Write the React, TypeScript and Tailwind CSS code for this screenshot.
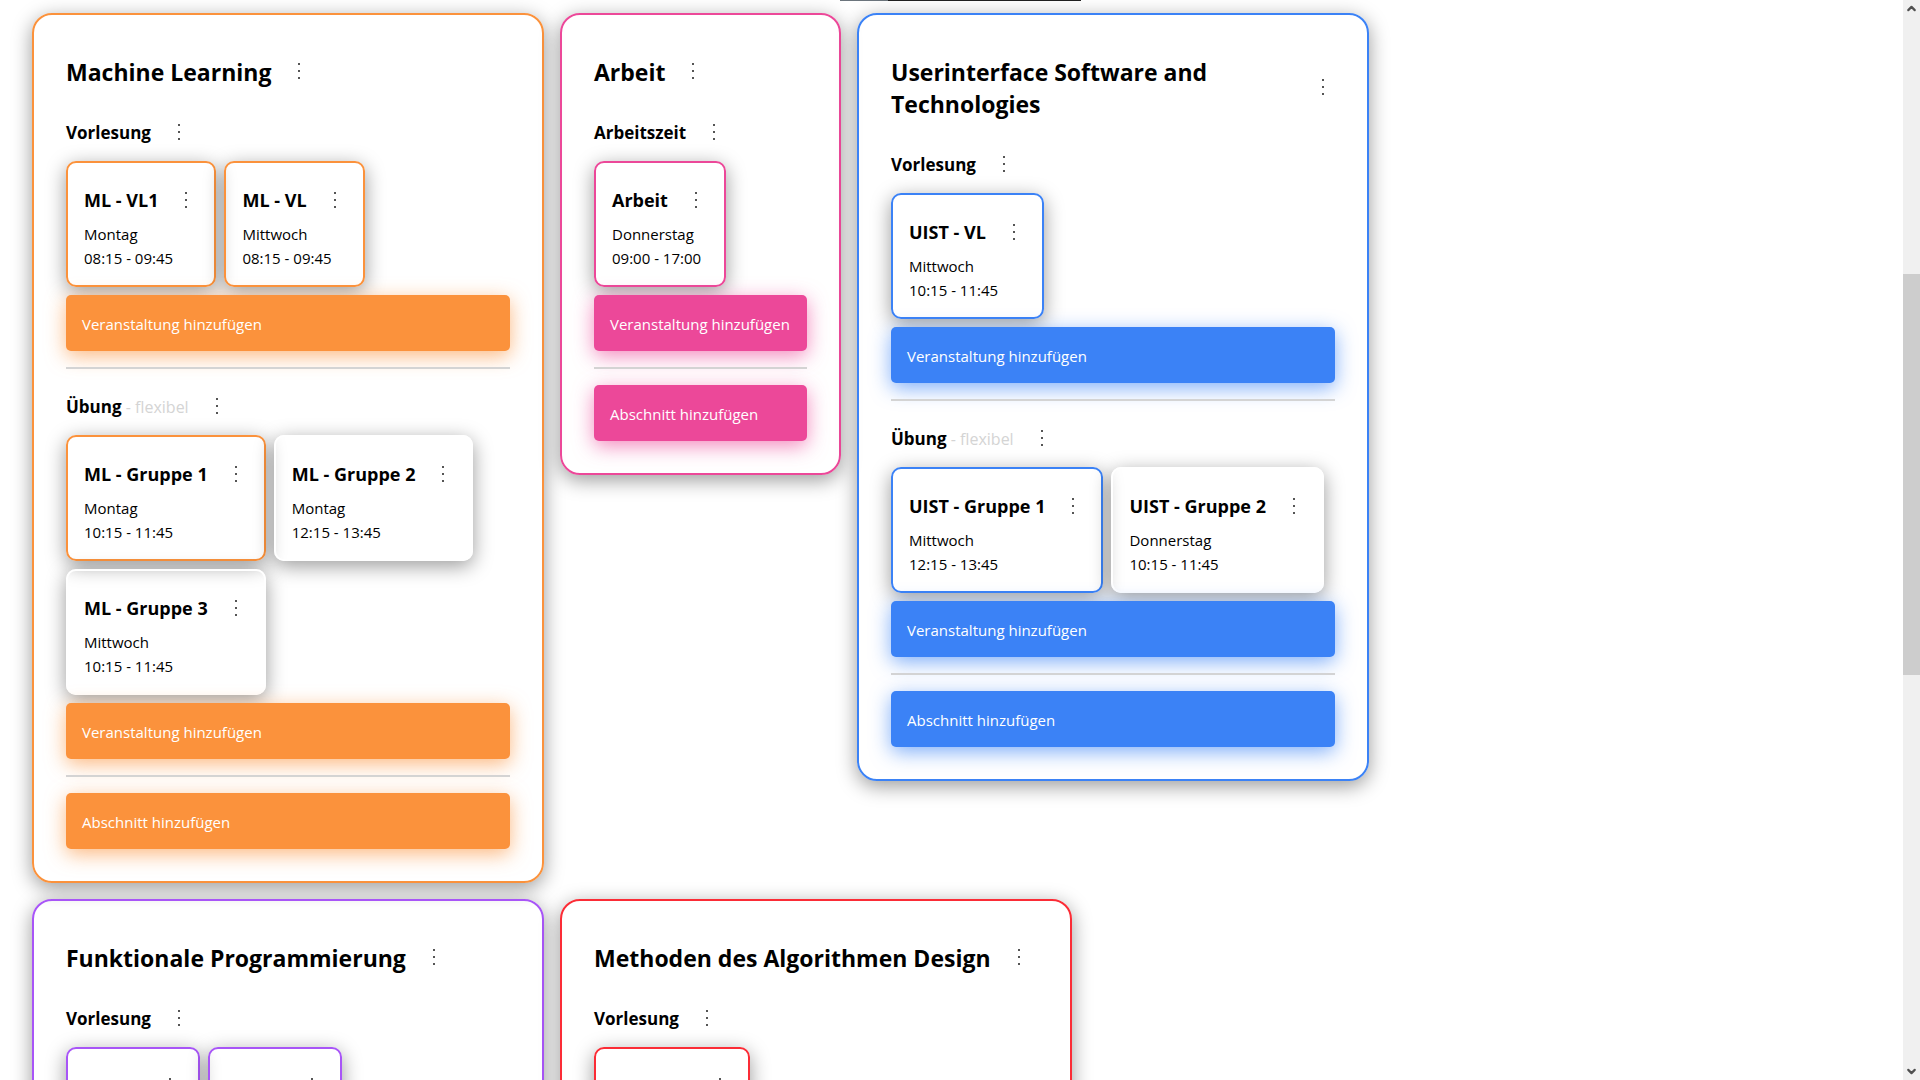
import { ChevronDown, ChevronUp } from "lucide-react";

type Tone = "orange" | "pink" | "blue" | "purple" | "red";
type Slot = { name: string; day: string; time: string; active: boolean };
type Section = { name: string; flexible?: boolean; slots: Slot[] };
type Course = { name: string; tone: Tone; width: string; sections: Section[] };

const borders: Record<Tone, string> = {
  orange: "border-[#fb923c]",
  pink: "border-[#ec4899]",
  blue: "border-[#3b82f6]",
  purple: "border-[#a855f7]",
  red: "border-[#fb2c36]",
};

const fills: Record<Tone, string> = {
  orange: "bg-[#fb923c] shadow-[0_5px_20px_rgba(251,146,60,0.65)]",
  pink: "bg-[#ec4899] shadow-[0_5px_20px_rgba(236,72,153,0.65)]",
  blue: "bg-[#3b82f6] shadow-[0_5px_20px_rgba(59,130,246,0.65)]",
  purple: "bg-[#a855f7] shadow-[0_5px_20px_rgba(168,85,247,0.65)]",
  red: "bg-[#fb2c36] shadow-[0_5px_20px_rgba(251,44,54,0.65)]",
};

const courses: Course[] = [
  {
    name: "Machine Learning",
    tone: "orange",
    width: "w-lg",
    sections: [
      {
        name: "Vorlesung",
        slots: [
          { name: "ML - VL1", day: "Montag", time: "08:15 - 09:45", active: true },
          { name: "ML - VL", day: "Mittwoch", time: "08:15 - 09:45", active: true },
        ],
      },
      {
        name: "Übung",
        flexible: true,
        slots: [
          { name: "ML - Gruppe 1", day: "Montag", time: "10:15 - 11:45", active: true },
          { name: "ML - Gruppe 2", day: "Montag", time: "12:15 - 13:45", active: false },
          { name: "ML - Gruppe 3", day: "Mittwoch", time: "10:15 - 11:45", active: false },
        ],
      },
    ],
  },
  {
    name: "Arbeit",
    tone: "pink",
    width: "w-[281px]",
    sections: [
      {
        name: "Arbeitszeit",
        slots: [{ name: "Arbeit", day: "Donnerstag", time: "09:00 - 17:00", active: true }],
      },
    ],
  },
  {
    name: "Userinterface Software and Technologies",
    tone: "blue",
    width: "w-lg",
    sections: [
      {
        name: "Vorlesung",
        slots: [{ name: "UIST - VL", day: "Mittwoch", time: "10:15 - 11:45", active: true }],
      },
      {
        name: "Übung",
        flexible: true,
        slots: [
          { name: "UIST - Gruppe 1", day: "Mittwoch", time: "12:15 - 13:45", active: true },
          { name: "UIST - Gruppe 2", day: "Donnerstag", time: "10:15 - 11:45", active: false },
        ],
      },
    ],
  },
  {
    name: "Funktionale Programmierung",
    tone: "purple",
    width: "w-lg",
    sections: [
      {
        name: "Vorlesung",
        slots: [
          { name: "FP - VL", day: "Dienstag", time: "08:15 - 09:45", active: true },
          { name: "FP - VL", day: "Freitag", time: "08:15 - 09:45", active: true },
        ],
      },
    ],
  },
  {
    name: "Methoden des Algorithmen Design",
    tone: "red",
    width: "w-lg",
    sections: [
      {
        name: "Vorlesung",
        slots: [{ name: "MAD - VL", day: "Dienstag", time: "12:15 - 13:45", active: true }],
      },
    ],
  },
];

function MenuButton({ label }: { label: string }) {
  return (
    <button type="button" aria-label={label} className="flex w-6 shrink-0 justify-center text-[#555]">
      <svg width="2" height="16" viewBox="0 0 2 16" fill="currentColor" aria-hidden="true">
        <rect width="2" height="2" />
        <rect y="7" width="2" height="2" />
        <rect y="14" width="2" height="2" />
      </svg>
    </button>
  );
}

function AddButton({ tone, children }: { tone: Tone; children: string }) {
  return (
    <button
      type="button"
      className={`w-full rounded-[5px] px-4 pt-[17px] pb-[15px] text-left text-[15px] leading-6 whitespace-nowrap text-white ${fills[tone]}`}
    >
      {children}
    </button>
  );
}

function SlotCard({ slot, tone }: { slot: Slot; tone: Tone }) {
  return (
    <article
      className={`rounded-[10px] border-2 p-4 pb-[15px] text-[15px] leading-6 shadow-[0_5px_20px_rgba(0,0,0,0.4)] ${slot.active ? borders[tone] : "border-white"}`}
    >
      <div className="mb-px flex h-[42px] items-center justify-between gap-4">
        <h4 className="text-lg font-bold whitespace-nowrap">{slot.name}</h4>
        <MenuButton label={`Menü ${slot.name}`} />
      </div>
      <p>{slot.day}</p>
      <p>{slot.time}</p>
    </article>
  );
}

function CourseSection({ section, tone }: { section: Section; tone: Tone }) {
  return (
    <section className="flex flex-col gap-2">
      <div className="flex h-[42px] items-center gap-4">
        <h3 className="pt-[2px] text-[17px] font-bold">
          {section.name}
          {section.flexible && <span className="text-base font-normal text-neutral-300"> - flexibel</span>}
        </h3>
        <MenuButton label={`Menü ${section.name}`} />
      </div>
      <div className="flex flex-wrap gap-2">
        {section.slots.map((slot, i) => (
          <SlotCard key={i} slot={slot} tone={tone} />
        ))}
      </div>
      <AddButton tone={tone}>Veranstaltung hinzufügen</AddButton>
    </section>
  );
}

function CourseCard({ course }: { course: Course }) {
  return (
    <article
      className={`flex flex-col gap-4 rounded-[20px] border-2 p-8 shadow-[0_5px_20px_rgba(0,0,0,0.4)] ${course.width} ${borders[course.tone]}`}
    >
      <div className="flex items-center gap-4 py-[7px]">
        <h2 className="pt-[2px] text-[23px] leading-8 font-bold">{course.name}</h2>
        <MenuButton label={`Menü ${course.name}`} />
      </div>
      {course.sections.map((section) => (
        <div key={section.name} className="flex flex-col gap-4">
          <CourseSection section={section} tone={course.tone} />
          <hr className="border-t-2 border-neutral-300" />
        </div>
      ))}
      <AddButton tone={course.tone}>Abschnitt hinzufügen</AddButton>
    </article>
  );
}

export default function App() {
  return (
    <div className="flex h-screen overflow-hidden bg-white font-['Open_Sans','Noto_Sans',sans-serif] text-base text-black">
      <main className="min-w-0 flex-1">
        <div className="ml-[840px] flex h-px">
          <div className="w-12 bg-[#6c757d]" />
          <div className="w-[193px] bg-[#212121]" />
        </div>
        <div className="flex max-w-[1440px] flex-wrap items-start gap-4 px-8 pt-3">
          {courses.map((course) => (
            <CourseCard key={course.name} course={course} />
          ))}
        </div>
      </main>
      <div className="flex w-[17px] shrink-0 flex-col items-center bg-[#f0f0f0] text-[#505050]">
        <ChevronUp size={13} strokeWidth={4} className="mt-[2px]" />
        <div className="mt-[259px] h-[401px] w-full bg-[#cdcdcd]" />
        <ChevronDown size={13} strokeWidth={4} className="mt-auto mb-[2px]" />
      </div>
    </div>
  );
}
